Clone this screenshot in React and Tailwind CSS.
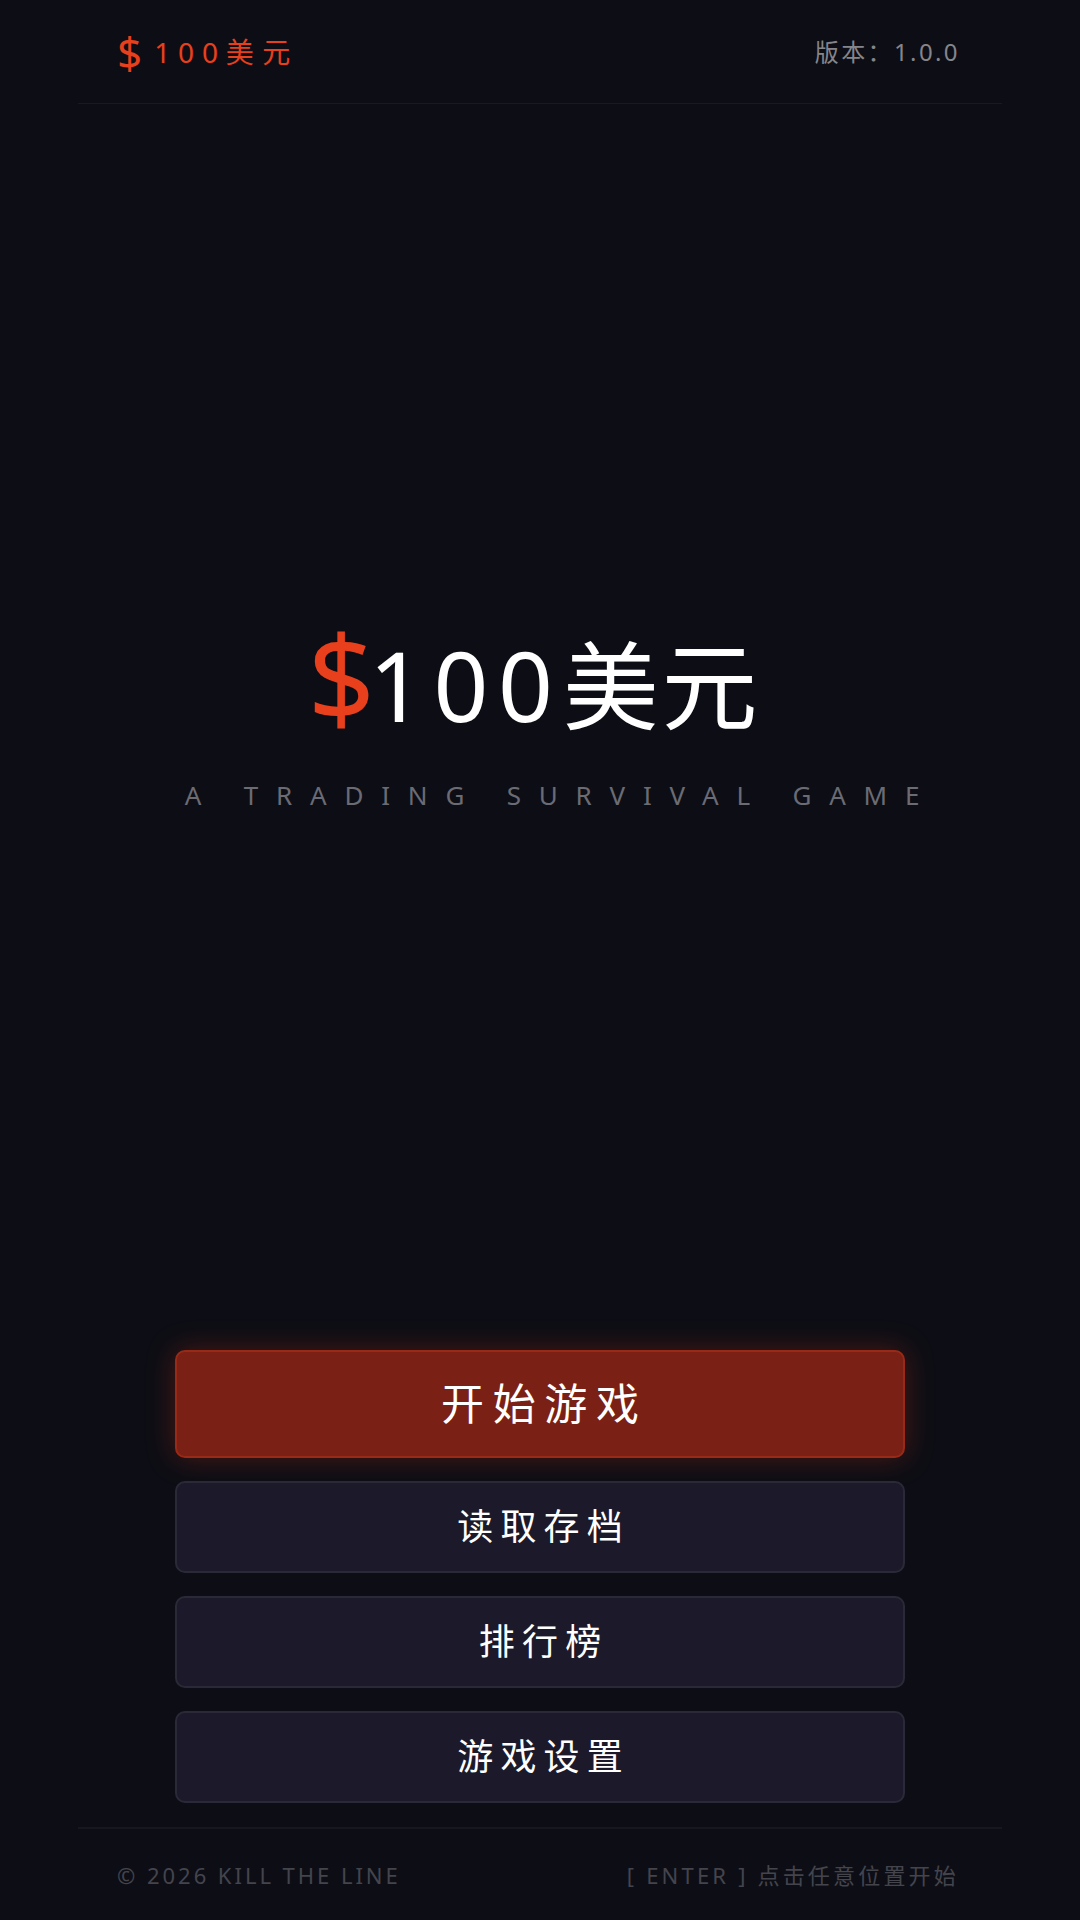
export default function App() {
  const font = { fontFamily: '"Noto Sans", "Noto Sans CJK SC", sans-serif' };

  return (
    <div
      className="flex h-screen w-full flex-col overflow-hidden bg-[#0d0e15] text-white"
      style={font}
    >
      {/* header */}
      <header className="mx-[78px] flex h-[104px] shrink-0 items-center justify-between border-b border-[#2a1316] px-[39px]">
        <div className="flex items-center text-[#e8401c]">
          <span className="text-[44px] leading-none">$</span>
          <span className="ml-[12px] text-[28px] leading-none tracking-[0.28em]">100</span>
          <span className="text-[28px] leading-none tracking-[0.3em]">美元</span>
        </div>
        <div className="mr-[3px] text-[24px] leading-none tracking-[0.1em] text-[#85858c]">版本：1.0.0</div>
      </header>

      <main className="flex flex-1 flex-col">
        <div className="flex flex-col items-center pt-[514px]">
          <h1 className="flex items-baseline pr-[12px] leading-none font-normal">
            <span className="-mr-[6px] text-[118px] leading-none text-[#e8401c]">$</span>
            <span className="text-[96px] leading-none tracking-[0.1em]">100</span>
            <span className="text-[96px] leading-none tracking-[0.03em]">美元</span>
          </h1>
          <p className="mt-[46px] pl-[42px] text-[26px] leading-none tracking-[0.685em] text-[#6b6b74]">
            A TRADING SURVIVAL GAME
          </p>
        </div>

        <div className="flex-1" />

        <div className="mx-auto mb-[24px] flex w-[730px] flex-col gap-[23px]">
          <button
            type="button"
            className="flex h-[108px] items-center justify-center rounded-[10px] border-2 border-[#9a2a18] bg-[#7b2014] pl-[0.2em] text-[43px] tracking-[0.2em] text-white shadow-[0_0_28px_rgba(190,45,20,0.35)]"
          >
            开始游戏
          </button>
          {["读取存档", "排行榜", "游戏设置"].map((label) => (
            <button
              key={label}
              type="button"
              className="flex h-[92px] items-center justify-center rounded-[10px] border-2 border-[#2a2937] bg-[#1c1a2a] pl-[0.2em] text-[36px] tracking-[0.2em] text-white"
            >
              {label}
            </button>
          ))}
        </div>
      </main>

      {/* footer */}
      <footer className="mx-[78px] flex h-[93px] shrink-0 items-center justify-between border-t-2 border-[#17171e] px-[39px] text-[22px] leading-none text-[#44444d]">
        <span className="tracking-[0.135em]">© 2026 KILL THE LINE</span>
        <span className="mr-[4px] tracking-[0.145em]">[ ENTER ] 点击任意位置开始</span>
      </footer>
    </div>
  );
}
